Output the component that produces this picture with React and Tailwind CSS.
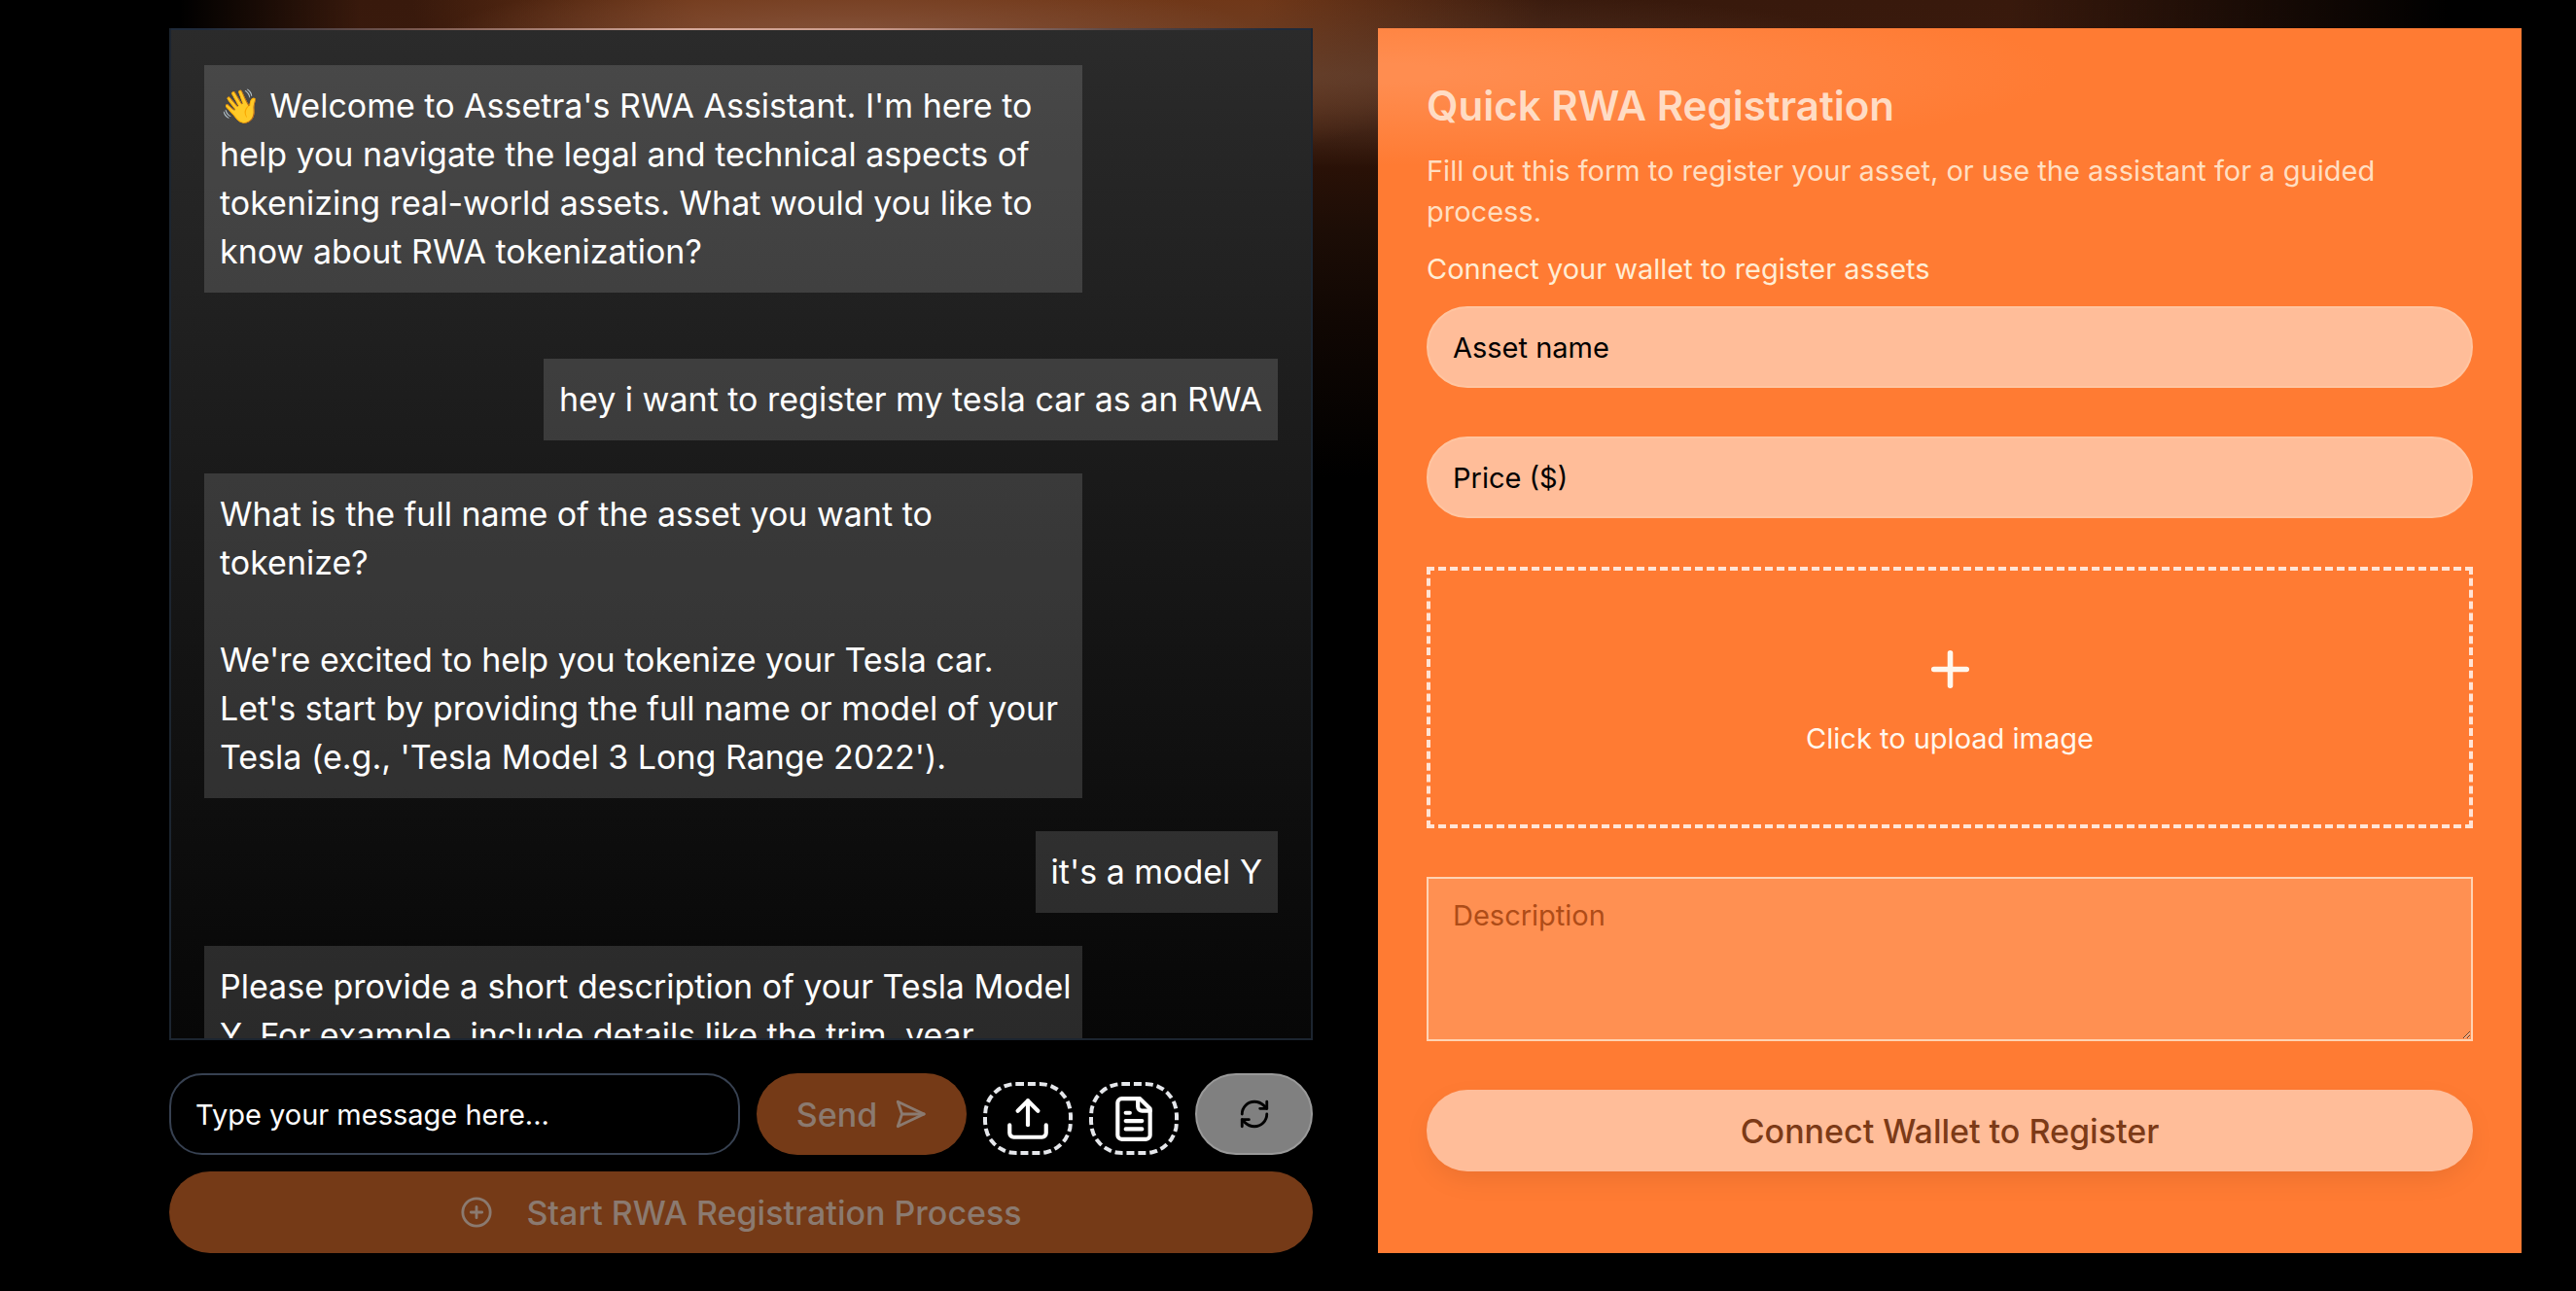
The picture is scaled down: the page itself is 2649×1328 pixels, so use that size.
import React from "react";

const messages = [
  { from: "bot", text: "👋 Welcome to Assetra's RWA Assistant. I'm here to help you navigate the legal and technical aspects of tokenizing real-world assets. What would you like to know about RWA tokenization?" },
  { from: "user", text: "hey i want to register my tesla car as an RWA" },
  { from: "bot", text: "What is the full name of the asset you want to tokenize?\n\nWe're excited to help you tokenize your Tesla car. Let's start by providing the full name or model of your Tesla (e.g., 'Tesla Model 3 Long Range 2022')." },
  { from: "user", text: "it's a model Y" },
  { from: "bot", text: "Please provide a short description of your Tesla Model Y. For example, include details like the trim, year," },
];

function Icon({ className, children }) {
  return (
    <svg viewBox="0 0 24 24" fill="none" stroke="currentColor" strokeWidth={2} strokeLinecap="round" strokeLinejoin="round" className={className} aria-hidden="true">
      {children}
    </svg>
  );
}

function Chat() {
  return (
    <section className="flex min-h-0 min-w-0 flex-col gap-[17px]">
      <div className="relative mb-[17px] flex min-h-0 flex-1 flex-col gap-[34px] overflow-hidden border-2 border-t-0 border-[#1c2530] bg-linear-to-b from-[#2b2b2b] to-[#070707] px-[34px] pt-[38px]">
        {messages.map((m, i) => (
          <p
            key={i}
            className={
              m.from === "bot"
                ? "w-[903px] max-w-full shrink-0 self-start whitespace-pre-line bg-white/14 py-[17px] pr-[8px] pl-[16px] text-[34px] leading-[50px] first:mb-[34px]"
                : "shrink-0 self-end bg-white/14 px-[16px] py-[17px] text-[34px] leading-[50px]"
            }
          >
            {m.text}
          </p>
        ))}
        <div className="absolute inset-x-0 top-0 h-[2px] bg-[linear-gradient(to_right,#1f2a3a_3%,#7d5a50_22%,#d6aa9c_45%,#c9998a_62%,#5d4a48_82%,#1f2a3a_97%)]" />
      </div>
      <form className="flex items-end gap-[17px]" onSubmit={(e) => e.preventDefault()}>
        <input aria-label="Message" placeholder="Type your message here..." className="h-[84px] min-w-0 flex-1 rounded-[34px] border-2 border-[#374151] bg-black px-[25px] text-[29px] placeholder:text-white" />
        <button className="flex h-[84px] w-[216px] items-center justify-center gap-[17px] rounded-full bg-[#753a17] text-[34px] font-medium text-[#8b7a70]">
          Send
          <Icon className="size-[34px]">
            <path d="m3 3 3 9-3 9 19-9Z" />
            <path d="M6 12h16" />
          </Icon>
        </button>
        <button type="button" aria-label="Upload file" className="flex h-[75px] w-[92px] items-center justify-center rounded-[34px] border-4 border-dashed border-[#e5e7eb]">
          <Icon className="size-[50px]">
            <path d="M21 15v4a2 2 0 0 1-2 2H5a2 2 0 0 1-2-2v-4" />
            <path d="m17 8-5-5-5 5" />
            <path d="M12 3v12" />
          </Icon>
        </button>
        <button type="button" aria-label="Attach document" className="flex h-[75px] w-[92px] items-center justify-center rounded-[34px] border-4 border-dashed border-[#e5e7eb]">
          <Icon className="size-[50px]">
            <path d="M15 2H6a2 2 0 0 0-2 2v16a2 2 0 0 0 2 2h12a2 2 0 0 0 2-2V7Z" />
            <path d="M14 2v4a2 2 0 0 0 2 2h4" />
            <path d="M10 9H8M16 13H8M16 17H8" />
          </Icon>
        </button>
        <button type="button" aria-label="Restart" className="flex h-[84px] w-[121px] items-center justify-center rounded-full border-2 border-[#999] bg-[#808080] text-black">
          <Icon className="size-[34px]">
            <path d="M3 12a9 9 0 0 1 9-9 9.75 9.75 0 0 1 6.74 2.74L21 8" />
            <path d="M21 3v5h-5" />
            <path d="M21 12a9 9 0 0 1-9 9 9.75 9.75 0 0 1-6.74-2.74L3 16" />
            <path d="M8 16H3v5" />
          </Icon>
        </button>
      </form>
      <button className="flex h-[84px] items-center justify-center gap-[34px] rounded-full bg-[#753a17] text-[34px] font-medium text-[#8b7a70]">
        <Icon className="size-[34px]">
          <circle cx="12" cy="12" r="10" />
          <path d="M8 12h8M12 8v8" />
        </Icon>
        Start RWA Registration Process
      </button>
    </section>
  );
}

function RegistrationForm() {
  return (
    <form className="flex min-w-0 flex-col bg-[#ff7b33] bg-[radial-gradient(ellipse_700px_95px_at_0px_46px,#ff8d50_10%,#ff7b33)] bg-no-repeat p-[50px]" onSubmit={(e) => e.preventDefault()}>
      <h2 className="text-[42px] leading-[59px] font-semibold text-[#ffdcc4]">Quick RWA Registration</h2>
      <p className="mt-[17px] text-[29px] leading-[42px] text-[#ffdfc2]">Fill out this form to register your asset, or use the assistant for a guided process.</p>
      <p className="mt-[17px] text-[29px] leading-[42px] text-[#ffedd5]">Connect your wallet to register assets</p>
      <input aria-label="Asset name" placeholder="Asset name" className="mt-[17px] h-[84px] rounded-full border-2 border-[#ffc5a1] bg-[#ffbd99] px-[25px] text-[29px] text-black placeholder:text-black" />
      <input aria-label="Price ($)" placeholder="Price ($)" className="mt-[50px] h-[84px] rounded-full border-2 border-[#ffc5a1] bg-[#ffbd99] px-[25px] text-[29px] text-black placeholder:text-black" />
      <button type="button" className="mt-[50px] flex h-[269px] flex-col items-center justify-center gap-[17px] border-4 border-dashed border-[#ffe4d6] text-[29px] leading-[42px] text-[#fff7ed]">
        <Icon className="size-[67px]">
          <path d="M12 6v12M6 12h12" />
        </Icon>
        Click to upload image
      </button>
      <textarea aria-label="Description" placeholder="Description" className="mt-[50px] h-[169px] border-2 border-[#ffd3b3] bg-[#ff9052] px-[25px] py-[17px] text-[29px] leading-[42px] text-black placeholder:text-[#ae4c18]" />
      <button className="mt-[50px] h-[84px] rounded-full bg-[#ffbd99] text-[34px] font-medium text-[#7c3a17] shadow-[0_10px_30px_-6px_rgba(0,0,0,0.1)]">Connect Wallet to Register</button>
    </form>
  );
}

export default function App() {
  return (
    <main className="flex h-screen flex-col overflow-hidden bg-black bg-[linear-gradient(to_right,#000_7%,transparent_14%,transparent_78%,#000_95%),radial-gradient(ellipse_16%_5%_at_33%_3%,#8a5a44cc,transparent),radial-gradient(ellipse_24%_7%_at_52%_6%,#6b4a3899_5%,transparent),radial-gradient(ellipse_22%_14%_at_38%_0%,#703616_50%,transparent),linear-gradient(to_bottom,#38190c_0%,#3b1b0d_8%,#2c1207_12%,#1c0d06_18%,#100703_25%,#000_37%)] pt-[29px] pr-[56px] pb-[39px] pl-[174px] font-['Inter',sans-serif] text-white">
      <div className="grid min-h-0 flex-1 grid-cols-2 gap-[67px]">
        <Chat />
        <RegistrationForm />
      </div>
    </main>
  );
}
